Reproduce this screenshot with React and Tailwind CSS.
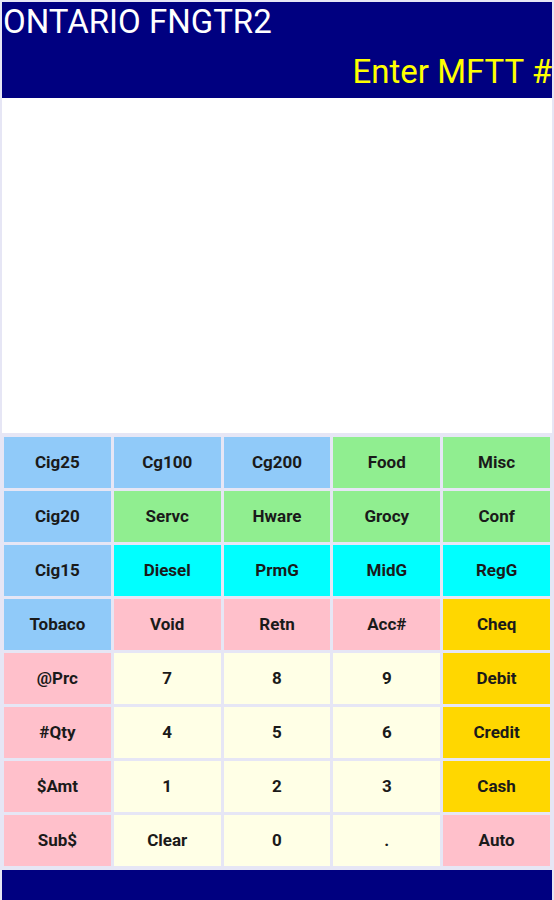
import React from "react";

const C = {
  b: "bg-[#90caf9]",
  g: "bg-[#90ee90]",
  c: "bg-[#00ffff]",
  p: "bg-[#ffc0cb]",
  y: "bg-[#ffd700]",
  l: "bg-[#ffffe6]",
};

const rows = [
  [["Cig25", "b"], ["Cg100", "b"], ["Cg200", "b"], ["Food", "g"], ["Misc", "g"]],
  [["Cig20", "b"], ["Servc", "g"], ["Hware", "g"], ["Grocy", "g"], ["Conf", "g"]],
  [["Cig15", "b"], ["Diesel", "c"], ["PrmG", "c"], ["MidG", "c"], ["RegG", "c"]],
  [["Tobaco", "b"], ["Void", "p"], ["Retn", "p"], ["Acc#", "p"], ["Cheq", "y"]],
  [["@Prc", "p"], ["7", "l"], ["8", "l"], ["9", "l"], ["Debit", "y"]],
  [["#Qty", "p"], ["4", "l"], ["5", "l"], ["6", "l"], ["Credit", "y"]],
  [["$Amt", "p"], ["1", "l"], ["2", "l"], ["3", "l"], ["Cash", "y"]],
  [["Sub$", "p"], ["Clear", "l"], ["0", "l"], [".", "l"], ["Auto", "p"]],
];

export default function App() {
  return (
    <div
      className="w-[554px] h-[900px] bg-[#e6e6f5] px-[2px] pt-[2px] flex flex-col overflow-hidden"
      style={{ fontFamily: "Roboto, 'Liberation Sans', sans-serif" }}
    >
      <div className="h-[96px] bg-[#000080] flex flex-col justify-between pb-[9px]">
        <div className="text-white text-[33px] leading-[40px] pl-[1px] whitespace-nowrap">ONTARIO FNGTR2</div>
        <div className="text-[#ffff00] text-[33px] leading-[34px] text-right whitespace-nowrap">Enter MFTT #</div>
      </div>
      <div className="h-[335px] bg-white" />
      <div className="grid grid-cols-5 gap-[3px] px-[2px] pt-[4px] pb-[4px]">
        {rows.flat().map(([t, c], i) => (
          <div
            key={i}
            className={`${C[c]} h-[51px] flex items-center justify-center text-[17px] font-bold text-[#1a1a1a]`}
          >
            {t}
          </div>
        ))}
      </div>
      <div className="flex-1 bg-[#000080]" />
    </div>
  );
}
